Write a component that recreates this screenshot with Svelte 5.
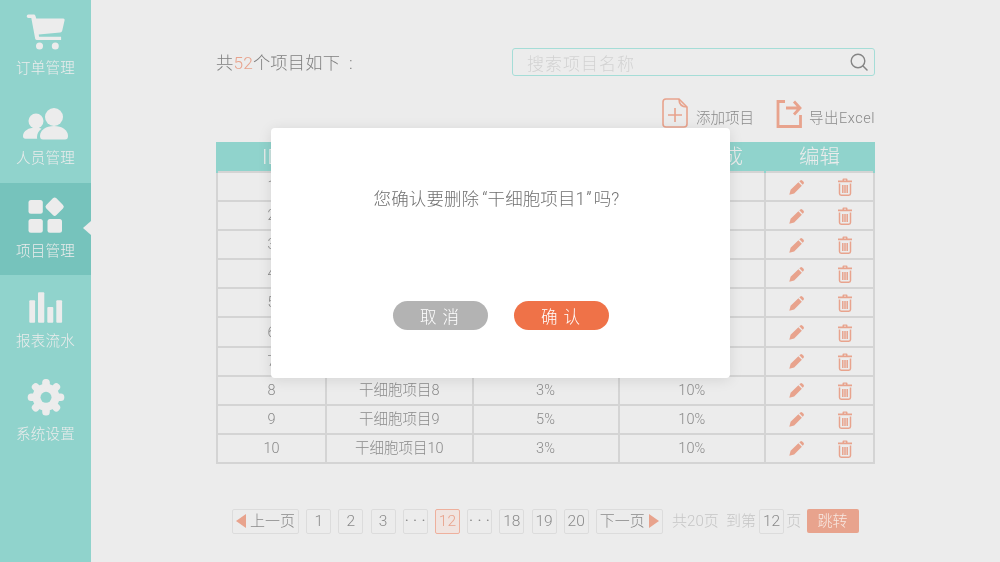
<script>
  const rates = ['3%', '5%', '3%', '5%', '3%', '5%', '3%', '3%', '5%', '3%'];
  const rows = rates.map((rate, i) => ({ id: i + 1, name: `干细胞项目${i + 1}`, rate, done: '10%' }));
  const pagesLeft = ['1', '2', '3', '···', '12', '···', '18', '19', '20'];
  const teeth = [0, 45, 90, 135, 180, 225, 270, 315];
</script>

<div class="page">
  <nav class="sidebar">
    <a class="item">
      <svg viewBox="26 11 40 40" width="40" height="40">
        <path class="ink" d="M28.5 14.5h5.2q1.4 0 1.8 1.4l.7 2.6h27q1.8 0 1.4 1.8l-2.4 10.4q-.4 1.6-2 1.8l-21.5 2 .4 2.2h22v3.4H37q-1.5 0-1.8-1.4L31.3 18H28.5q-1.8 0-1.8-1.8t1.8-1.7z" />
        <circle class="ink" cx="39.5" cy="46" r="3.5" />
        <circle class="ink" cx="55.3" cy="46" r="3.5" />
      </svg>
      <span>订单管理</span>
    </a>
    <a class="item">
      <svg viewBox="26 102 40 40" width="40" height="40" style="overflow:visible">
        <circle class="ink" cx="36" cy="120" r="7.5" />
        <path class="ink" d="M23 135c0-5 6-8.500 12-8.500 2.500 0 5 .5 6.500 1.200-3 2-4.500 5-4.500 8.300 0 .6 0 1.200.2 1.800H25.500q-2.500 0-2.500-2.800z" />
        <circle class="ink" cx="54" cy="116" r="9" />
        <path class="ink" d="M40 135c0-6 6-10 14-10s14 4 14 10q0 3.500-3 3.500H43q-3 0-3-3.500z" />
      </svg>
      <span>人员管理</span>
    </a>
    <a class="item active">
      <svg viewBox="26 194 40 40" width="40" height="40" style="overflow:visible">
        <rect class="ink" x="28.500" y="200" width="14.300" height="13.700" rx="2.500" />
        <rect class="ink" x="47.500" y="199.500" width="14.300" height="14.300" rx="2.500" transform="rotate(45 54.650 206.650)" />
        <rect class="ink" x="28.500" y="219" width="14.300" height="13.700" rx="2.500" />
        <rect class="ink" x="47.500" y="219" width="14.500" height="13.700" rx="2.500" />
      </svg>
      <span>项目管理</span>
    </a>
    <a class="item">
      <svg viewBox="26 285 40 40" width="40" height="40">
        <rect class="ink" x="29.300" y="299.300" width="5.800" height="22.400" rx="1" />
        <rect class="ink" x="38" y="291.300" width="6.300" height="30.400" rx="1" />
        <rect class="ink" x="47.300" y="306" width="6" height="15.700" rx="1" />
        <rect class="ink" x="56.300" y="299.300" width="5.800" height="22.400" rx="1" />
      </svg>
      <span>报表流水</span>
    </a>
    <a class="item">
      <svg viewBox="26 377 40 40" width="40" height="40">
        <circle class="ink" cx="46" cy="397.300" r="13.500" />
        {#each teeth as a}
          <rect class="ink" x="42.200" y="379" width="7.600" height="10" rx="3.500" transform="rotate({a} 46 397.300)" />
        {/each}
        <circle class="hole" cx="46" cy="397.300" r="5.500" />
      </svg>
      <span>系统设置</span>
    </a>
  </nav>

  <main class="content">
    <div class="top">
      <div class="count">共<em>52</em>个项目如下<i>:</i></div>
      <div class="search">
        <span>搜索项目名称</span>
        <svg viewBox="0 0 18 18" width="18" height="18">
          <circle cx="8" cy="8" r="6.800" fill="none" stroke="#858585" stroke-width="1.400" />
          <path d="M13 13l4 4" stroke="#858585" stroke-width="1.500" stroke-linecap="round" />
        </svg>
      </div>
    </div>

    <div class="tools">
      <div class="tool">
        <svg viewBox="0 0 26 30" width="26" height="30">
          <path class="line" d="M4 1h13l8 8v17q0 3-3 3H4q-3 0-3-3V4q0-3 3-3z" />
          <path class="line" d="M17 1q0 8 8 8M6 17h14M13 10v14" />
        </svg>
        <span>添加项目</span>
      </div>
      <div class="tool second">
        <svg viewBox="0 0 26 29" width="26" height="29">
          <path class="thick" d="M9 2.500H2V27.500H24.500V16" />
          <path class="thick" d="M10 9h13M18 2.500l6 6.500-6 6.500" />
        </svg>
        <span>导出Excel</span>
      </div>
    </div>

    <table>
      <colgroup>
        <col style="width:109px" /><col style="width:146.500px" /><col style="width:146px" /><col style="width:146.500px" /><col style="width:109px" />
      </colgroup>
      <thead>
        <tr><th>ID</th><th>项目名称</th><th>项目比例</th><th>目标额完成</th><th>编辑</th></tr>
      </thead>
      <tbody>
        {#each rows as row}
          <tr>
            <td>{row.id}</td>
            <td>{row.name}</td>
            <td>{row.rate}</td>
            <td>{row.done}</td>
            <td>
              <div class="actions">
                <svg viewBox="0 0 16 16" width="15" height="15">
                  <path class="fill" d="M.3 15.700l1.400-5.200L10 2.300l3.700 3.700-8.200 8.300zM11 1.400l1.100-1q1-.7 2 .1l1.400 1.400q.8 1 .1 2l-1 1.100z" />
                </svg>
                <svg viewBox="0 0 14 18" width="14" height="18">
                  <path class="fill" d="M4.500 2.500V1.500Q4.500.500 5.500.500h3q1 0 1 1v1H14v1.800H0V2.500zM6 1.800v.7h2v-.7z" />
                  <path class="trash" d="M1.500 5.500v10q0 1.700 1.700 1.700h7.600q1.700 0 1.700-1.700v-10M4.800 7v8M7 7v8M9.200 7v8" />
                </svg>
              </div>
            </td>
          </tr>
        {/each}
      </tbody>
    </table>

    <div class="pager">
      <button class="wide">
        <svg viewBox="0 0 10 14" width="10" height="14"><path class="fill" d="M0 7l10-7v14z" /></svg>上一页
      </button>
      {#each pagesLeft as p}
        <button class:on={p === '12'} class:dots={p === '···'}>{p}</button>
      {/each}
      <button class="wide">
        下一页<svg viewBox="0 0 10 14" width="10" height="14"><path class="fill" d="M10 7L0 0v14z" /></svg>
      </button>
      <span class="muted total">共20页</span>
      <span class="muted to">到第</span>
      <button class="box">12</button>
      <span class="muted">页</span>
      <button class="go">跳转</button>
    </div>
  </main>

  <div class="overlay">
    <div class="dialog">
      <p>您确认要删除<span class="open">“</span>干细胞项目1<span class="close">”</span>吗?</p>
      <div class="btns">
        <button class="cancel">取 消</button>
        <button class="ok">确 认</button>
      </div>
    </div>
  </div>
</div>

<style>
  :global(body) {
    margin: 0;
    background: #ececec;
  }

  .page {
    position: relative;
    display: flex;
    width: 1000px;
    height: 562px;
    overflow: hidden;
    will-change: transform; /* grey text antialiasing */
    font-family: Roboto, "Noto Sans CJK SC", sans-serif;
    font-weight: 300;
    color: #8a8a8a;
  }

  .sidebar {
    flex: none;
    width: 91px;
    background: #90d3cc;
  }

  .item {
    position: relative;
    display: flex;
    flex-direction: column;
    align-items: center;
    height: 91.500px;
    box-sizing: border-box;
    padding-top: 11px;
    color: #ececec;
    font-size: 14.500px;
    letter-spacing: 0.300px;
    line-height: 20px;
  }

  .item span {
    margin-top: 6px;
  }

  .item:nth-child(odd) span {
    margin-top: 8px;
  }

  .item svg {
    display: block;
  }

  .active {
    background: #76c3bc;
  }

  .active::after {
    content: "";
    position: absolute;
    right: 0;
    top: 38px;
    border: 7.500px solid transparent;
    border-right: 8px solid #ececec;
    border-left: 0;
  }

  .ink {
    fill: #ececec;
  }

  .hole {
    fill: #90d3cc;
  }

  .content {
    flex: none;
    width: 659px;
    margin-left: 125px;
    padding-top: 48px;
  }

  .top {
    display: flex;
    justify-content: space-between;
    align-items: center;
    height: 28px;
  }

  .count {
    margin-top: -2px;
    font-size: 17.300px;
    letter-spacing: 0.150px;
    color: #7f7f7f;
    white-space: nowrap;
  }

  .count em {
    font-style: normal;
    color: #e8a38d;
  }

  .count i {
    font-style: normal;
    margin-left: 9px;
  }

  .search {
    display: flex;
    justify-content: space-between;
    align-items: center;
    width: 363px;
    height: 28px;
    box-sizing: border-box;
    padding: 0 6px 0 14px;
    border: 1px solid #a5ddd7;
    border-radius: 3px;
    font-size: 17px;
    letter-spacing: 1px;
    color: #d2d2d2;
  }

  .tools {
    display: flex;
    justify-content: flex-end;
    align-items: flex-end;
    height: 29px;
    margin-top: 23px;
    font-size: 14.500px;
    color: #8a8a8a;
  }

  .tool {
    display: flex;
    align-items: flex-end;
    gap: 8px;
    line-height: 20px;
  }

  .tool span {
    margin-bottom: -1px;
  }

  .tool svg {
    display: block;
    flex: none;
  }

  .second {
    margin-left: 22px;
    letter-spacing: 0.500px;
  }

  .second svg {
    margin-right: -1px;
  }

  .line {
    fill: none;
    stroke: #e8a38d;
    stroke-width: 1.600;
  }

  .thick {
    fill: none;
    stroke: #e8a38d;
    stroke-width: 2.800;
  }

  .fill {
    fill: #e8a38d;
  }

  .trash {
    fill: none;
    stroke: #e8a38d;
    stroke-width: 1.500;
  }

  table {
    width: 657px;
    margin-top: 14px;
    table-layout: fixed;
    border-collapse: collapse;
  }

  th {
    height: 27px;
    padding: 0;
    border: 2px solid #90d3cc;
    border-bottom: 0;
    background: #90d3cc;
    color: #ececec;
    font-size: 20.500px;
    font-weight: 300;
    line-height: 27px;
  }

  td {
    height: 29.100px;
    padding: 1px 0 0;
    box-sizing: border-box;
    border: 2px solid #d4d4d4;
    text-align: center;
    font-size: 14.500px;
    line-height: 20px;
    color: #8a8a8a;
  }

  .actions {
    display: flex;
    justify-content: center;
    align-items: center;
    gap: 34px;
    padding-left: 1px;
  }

  .actions svg {
    display: block;
  }

  .pager {
    display: flex;
    align-items: center;
    gap: 7.200px;
    margin-top: 45px;
    margin-left: 16px;
    font-size: 15px;
    line-height: 20px;
    white-space: nowrap;
  }

  .pager button {
    display: flex;
    justify-content: center;
    align-items: center;
    gap: 4px;
    width: 25px;
    height: 25px;
    padding: 0;
    box-sizing: border-box;
    border: 1px solid #dcdcdc;
    border-radius: 2px;
    background: none;
    color: #8a8a8a;
    font: inherit;
    font-size: 15.500px;
  }

  .pager .wide {
    width: 67px;
    font-size: 15px;
  }

  .pager .on {
    border-color: #eeb09d;
    background: #f0e4e0;
    color: #e8a38d;
  }

  .pager .dots {
    letter-spacing: 4.300px;
    padding-left: 4px;
    font-weight: 400;
  }

  .pager .go {
    width: 52px;
    height: 24px;
    margin-left: -2px;
    border: none;
    background: #e8a38d;
    color: #f7e8e2;
    font-size: 15px;
  }

  .muted {
    color: #c6c6c6;
  }

  .total {
    margin-left: 2px;
  }

  .to {
    margin-right: -4px;
  }

  .pager .box + .muted {
    margin-left: -5px;
  }

  .overlay {
    position: absolute;
    left: 271px;
    top: 128px;
  }

  .dialog {
    display: flex;
    flex-direction: column;
    align-items: center;
    width: 459px;
    height: 250px;
    border-radius: 4px;
    background: #fff;
    box-shadow: 0 2px 14px rgba(0, 0, 0, 0.1);
  }

  .dialog p {
    margin: 59px 0 0;
    padding-right: 8px;
    font-size: 17.500px;
    letter-spacing: 0.100px;
    line-height: 24px;
    color: #6f6f6f;
  }

  .open {
    margin-left: 3px;
  }

  .close {
    margin-left: 1px;
    margin-right: 2px;
  }

  .btns {
    display: flex;
    gap: 26px;
    margin-top: 90px;
  }

  .btns button {
    width: 95px;
    height: 29px;
    padding: 0;
    border: none;
    border-radius: 15px;
    color: #fff;
    font: inherit;
    font-size: 16.500px;
    letter-spacing: 1px;
  }

  .cancel {
    background: #b3b3b3;
  }

  .ok {
    background: #ef7248;
  }
</style>
